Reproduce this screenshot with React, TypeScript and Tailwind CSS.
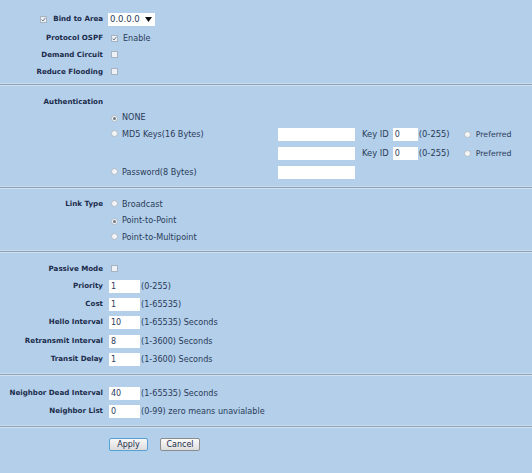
import React from 'react';

const font = { fontFamily: '"DejaVu Sans", Verdana, sans-serif' };

function Check({ checked = false }: { checked?: boolean }) {
  return (
    <span className="inline-flex w-[7px] h-[7px] border border-[#a7b3c1] bg-[#eef2f6] items-center justify-center shrink-0">
      {checked && (
        <svg width="5" height="5" viewBox="0 0 5 5">
          <path d="M0.6 2.6 L2 4 L4.4 0.8" stroke="#6d7784" strokeWidth="1" fill="none" />
        </svg>
      )}
    </span>
  );
}

function Radio({ checked = false }: { checked?: boolean }) {
  return (
    <span className="inline-flex w-[7px] h-[7px] rounded-full border border-[#b3bcc7] bg-[#f3f5f7] items-center justify-center shrink-0">
      {checked && <span className="w-[3px] h-[3px] rounded-full bg-[#6f7987]" />}
    </span>
  );
}

function Field({ value = '', w }: { value?: string; w: string }) {
  return (
    <div className={`${w} h-[13px] bg-white text-[8px] leading-[13px] pl-[2px] text-[#2d3d5a] shrink-0`}>{value}</div>
  );
}

function Row({ h, label, pre, children }: { h: string; label?: string; pre?: React.ReactNode; children?: React.ReactNode }) {
  return (
    <div className={`flex items-center ${h}`}>
      <div className="w-[103px] shrink-0 flex items-center justify-end gap-[6px] text-[7.1px] font-bold text-[#1b2b4a]">
        {pre}
        {label}
      </div>
      <div className="pl-[6px] flex items-center text-[8.1px] text-[#2b3b58]">{children}</div>
    </div>
  );
}

function Sep() {
  return (
    <div className="flex flex-col">
      <div className="h-px bg-[#c9dbed]" />
      <div className="h-px bg-[#8fa5b7]" />
      <div className="h-px bg-[#d0e0f0]" />
    </div>
  );
}

function KeyRow({ first }: { first: boolean }) {
  return (
    <Row h="h-[19px]">
      <div className="w-[169px] flex items-center">
        {first && (
          <>
            <span className="ml-[2px]"><Radio /></span>
            <span className="ml-[4px]">MD5 Keys(16 Bytes)</span>
          </>
        )}
      </div>
      <Field w="w-[77px]" />
      <span className="ml-[7px] mr-[4px] text-[8.4px]">Key ID</span>
      <Field value="0" w="w-[25px]" />
      <span className="ml-[1px] w-[45px] text-[8.4px]">(0-255)</span>
      <Radio />
      <span className="ml-[5px] text-[7.8px]">Preferred</span>
    </Row>
  );
}

export default function App() {
  return (
    <div className="w-[532px] h-[473px] bg-[#b3cfea] overflow-hidden" style={font}>
      <div className="pt-[10px] pb-[2px]">
        <Row h="h-[19px]" label="Bind to Area" pre={<Check checked />}>
          <div className="w-[47px] h-[13px] bg-white flex items-center justify-between pl-[2px] pr-[3px] -ml-[1px] text-[8.5px] text-[#2b3b58]">
            <span>0.0.0.0</span>
            <svg width="7" height="5" viewBox="0 0 7 5"><path d="M0 0 H7 L3.5 5 Z" fill="#111" /></svg>
          </div>
        </Row>
        <Row h="h-[18px]" label="Protocol OSPF">
          <span className="ml-[2px]"><Check checked /></span>
          <span className="ml-[5px]">Enable</span>
        </Row>
        <Row h="h-[17px]" label="Demand Circuit">
          <span className="ml-[2px]"><Check /></span>
        </Row>
        <Row h="h-[17px]" label="Reduce Flooding">
          <span className="ml-[2px]"><Check /></span>
        </Row>
      </div>
      <Sep />
      <div className="pt-[8px] pb-[5px]">
        <Row h="h-[16px]" label="Authentication" />
        <Row h="h-[15px]">
          <span className="ml-[2px]"><Radio checked /></span>
          <span className="ml-[4px]">NONE</span>
        </Row>
        <KeyRow first />
        <KeyRow first={false} />
        <Row h="h-[18px]">
          <div className="w-[169px] flex items-center">
            <span className="ml-[2px]"><Radio /></span>
            <span className="ml-[4px]">Password(8 Bytes)</span>
          </div>
          <Field w="w-[77px]" />
        </Row>
      </div>
      <Sep />
      <div className="pt-[7px] pb-[4px]">
        <Row h="h-[16px]" label="Link Type">
          <span className="ml-[2px]"><Radio /></span>
          <span className="ml-[4px]">Broadcast</span>
        </Row>
        <Row h="h-[17px]">
          <span className="ml-[2px]"><Radio checked /></span>
          <span className="ml-[4px]">Point-to-Point</span>
        </Row>
        <Row h="h-[17px]">
          <span className="ml-[2px]"><Radio /></span>
          <span className="ml-[4px]">Point-to-Multipoint</span>
        </Row>
      </div>
      <Sep />
      <div className="pt-[8px] pb-[5px]">
        <Row h="h-[16px]" label="Passive Mode">
          <span className="ml-[2px]"><Check /></span>
        </Row>
        <Row h="h-[18px]" label="Priority">
          <Field value="1" w="w-[31px]" />
          <span className="ml-[1px]">(0-255)</span>
        </Row>
        <Row h="h-[18px]" label="Cost">
          <Field value="1" w="w-[31px]" />
          <span className="ml-[1px]">(1-65535)</span>
        </Row>
        <Row h="h-[19px]" label="Hello Interval">
          <Field value="10" w="w-[31px]" />
          <span className="ml-[1px]">(1-65535) Seconds</span>
        </Row>
        <Row h="h-[18px]" label="Retransmit Interval">
          <Field value="8" w="w-[31px]" />
          <span className="ml-[1px]">(1-3600) Seconds</span>
        </Row>
        <Row h="h-[18px]" label="Transit Delay">
          <Field value="1" w="w-[31px]" />
          <span className="ml-[1px]">(1-3600) Seconds</span>
        </Row>
      </div>
      <Sep />
      <div className="pt-[8px] pb-[5px]">
        <Row h="h-[18px]" label="Neighbor Dead Interval">
          <Field value="40" w="w-[31px]" />
          <span className="ml-[1px]">(1-65535) Seconds</span>
        </Row>
        <Row h="h-[18px]" label="Neighbor List">
          <Field value="0" w="w-[31px]" />
          <span className="ml-[1px]">(0-99) zero means unavialable</span>
        </Row>
      </div>
      <Sep />
      <div className="pt-[10px] pl-[109px] flex items-center gap-[12px]">
        <button className="w-[39px] h-[13px] rounded-[2px] border border-[#5f9fd0] bg-gradient-to-b from-[#f7f7f7] to-[#dcdcdc] text-[8px] leading-[11px] text-[#1b2b4a] shadow-[0_0_0_1px_#a9d2f0]">
          Apply
        </button>
        <button className="w-[40px] h-[13px] rounded-[2px] border border-[#8c8c8c] bg-gradient-to-b from-[#fafafa] to-[#dedede] text-[8px] leading-[11px] text-[#1b2b4a]">
          Cancel
        </button>
      </div>
    </div>
  );
}
